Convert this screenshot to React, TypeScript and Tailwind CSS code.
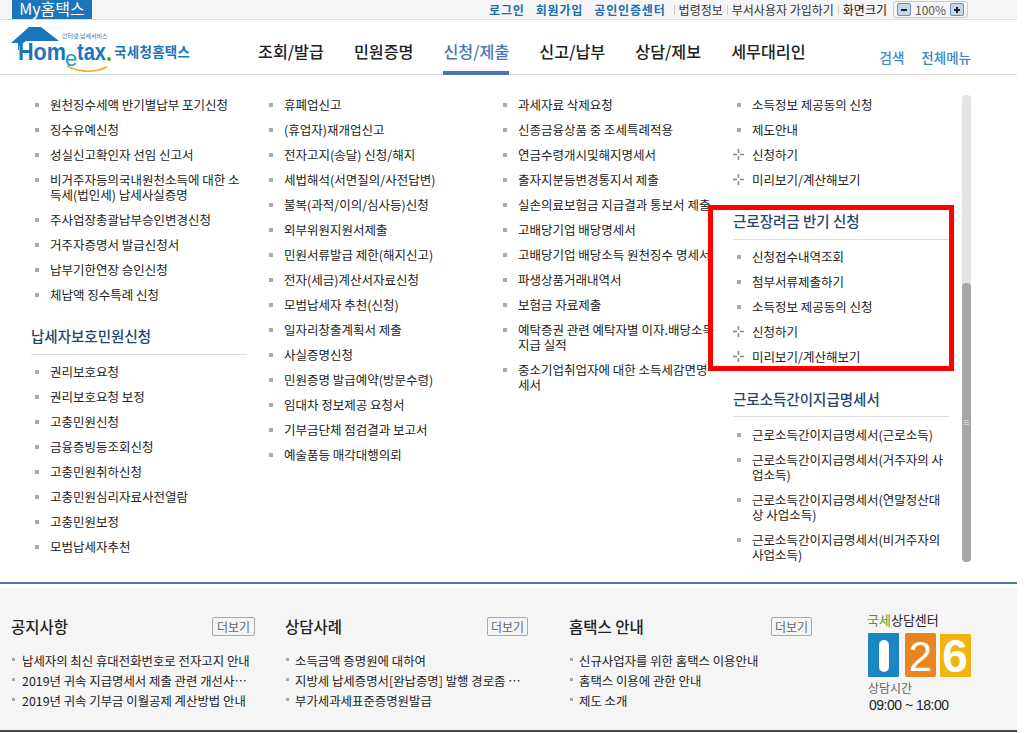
import React from 'react';

const font = { fontFamily: '"Noto Sans CJK KR", "Noto Sans", sans-serif' };

type Row = { text: string; plus?: boolean };
type Block = { title?: string; rows: Row[] };

const r = (text: string): Row => ({ text });
const p = (text: string): Row => ({ text, plus: true });

const columns: Block[][] = [
  [
    {
      rows: [
        r('원천징수세액 반기별납부 포기신청'),
        r('징수유예신청'),
        r('성실신고확인자 선임 신고서'),
        r('비거주자등의국내원천소득에 대한 소득세(법인세) 납세사실증명'),
        r('주사업장총괄납부승인변경신청'),
        r('거주자증명서 발급신청서'),
        r('납부기한연장 승인신청'),
        r('체납액 징수특례 신청'),
      ],
    },
    {
      title: '납세자보호민원신청',
      rows: [
        r('권리보호요청'),
        r('권리보호요청 보정'),
        r('고충민원신청'),
        r('금융증빙등조회신청'),
        r('고충민원취하신청'),
        r('고충민원심리자료사전열람'),
        r('고충민원보정'),
        r('모범납세자추천'),
      ],
    },
  ],
  [
    {
      rows: [
        r('휴폐업신고'),
        r('(휴업자)재개업신고'),
        r('전자고지(송달) 신청/해지'),
        r('세법해석(서면질의/사전답변)'),
        r('불복(과적/이의/심사등)신청'),
        r('외부위원지원서제출'),
        r('민원서류발급 제한(해지신고)'),
        r('전자(세금)계산서자료신청'),
        r('모범납세자 추천(신청)'),
        r('일자리창출계획서 제출'),
        r('사실증명신청'),
        r('민원증명 발급예약(방문수령)'),
        r('임대차 정보제공 요청서'),
        r('기부금단체 점검결과 보고서'),
        r('예술품등 매각대행의뢰'),
      ],
    },
  ],
  [
    {
      rows: [
        r('과세자료 삭제요청'),
        r('신종금융상품 중 조세특례적용'),
        r('연금수령개시및해지명세서'),
        r('출자지분등변경통지서 제출'),
        r('실손의료보험금 지급결과 통보서 제출'),
        r('고배당기업 배당명세서'),
        r('고배당기업 배당소득 원천징수 명세서'),
        r('파생상품거래내역서'),
        r('보험금 자료제출'),
        r('예탁증권 관련 예탁자별 이자.배당소득 지급 실적'),
        r('중소기업취업자에 대한 소득세감면명세서'),
      ],
    },
  ],
  [
    {
      rows: [
        r('소득정보 제공동의 신청'),
        r('제도안내'),
        p('신청하기'),
        p('미리보기/계산해보기'),
      ],
    },
    {
      title: '근로장려금 반기 신청',
      rows: [
        r('신청접수내역조회'),
        r('첨부서류제출하기'),
        r('소득정보 제공동의 신청'),
        p('신청하기'),
        p('미리보기/계산해보기'),
      ],
    },
    {
      title: '근로소득간이지급명세서',
      rows: [
        r('근로소득간이지급명세서(근로소득)'),
        r('근로소득간이지급명세서(거주자의 사업소득)'),
        r('근로소득간이지급명세서(연말정산대상 사업소득)'),
        r('근로소득간이지급명세서(비거주자의 사업소득)'),
      ],
    },
  ],
];

const notices = [
  {
    title: '공지사항',
    box: 'w-[244px] mr-[30px] shrink-0',
    more: 'w-[43px] h-[19px] border border-[#aaa] rounded-[2px] text-[12px] leading-[17px] text-center text-[#666]',
    item: 'relative pl-[11px] text-[12.4px] leading-[20px] text-[#222] truncate',
    items: ['납세자의 최신 휴대전화번호로 전자고지 안내', '2019년 귀속 지급명세서 제출 관련 개선사항 안내', '2019년 귀속 기부금 이월공제 계산방법 안내'],
  },
  {
    title: '상담사례',
    box: 'w-[243px] mr-[41px] shrink-0',
    more: 'w-[41px] h-[19px] border border-[#aaa] rounded-[2px] text-[12px] leading-[17px] text-center text-[#666]',
    item: 'relative pl-[10px] pr-[6px] text-[12.4px] leading-[20px] text-[#222] truncate',
    items: ['소득금액 증명원에 대하여', '지방세 납세증명서[완납증명] 발행 경로좀 알려주세요', '부가세과세표준증명원발급'],
  },
  {
    title: '홈택스 안내',
    box: 'w-[243px] mr-[56px] shrink-0',
    more: 'w-[41px] h-[19px] border border-[#aaa] rounded-[2px] text-[12px] leading-[17px] text-center text-[#666]',
    item: 'relative pl-[10px] pr-[6px] text-[12.4px] leading-[20px] text-[#222] truncate',
    items: ['신규사업자를 위한 홈택스 이용안내', '홈택스 이용에 관한 안내', '제도 소개'],
  },
];

const PlusMark = () => (
  <svg width="11" height="11" viewBox="0 0 11 11" className="absolute left-[-19px] top-[2px]">
    <path d="M5.5 0v4M5.5 7v4M0 5.5h4M7 5.5h4" stroke="#8a8a8a" strokeWidth="1.6" />
  </svg>
);

const MenuRow = ({ row }: { row: Row }) => (
  <li className="pl-[19px] text-[12.5px] leading-[15px] text-[#222] py-[5px]">
    <span className="relative block">
      {row.plus ? (
        <PlusMark />
      ) : (
        <span className="absolute left-[-15px] top-[6px] w-[4px] h-[4px] bg-[#aaa]" />
      )}
      {row.text}
    </span>
  </li>
);

// 좌표는 로고 왼쪽 위(11, 24) 기준
const Logo = () => (
  <svg width="190" height="50" viewBox="0 0 190 50" className="shrink-0">
    <path d="M0 19 L18 3 H30 L48 17 H15 L8 22 V26 H7 V19 Z" fill="#1b75bc" />
    <text x="51" y="14" fontSize="6" fill="#1b75bc">인터넷 납세서비스</text>
    <text x="7" y="36" fontSize="24" fontWeight="700" fill="#1b75bc" fontFamily="Liberation Sans, sans-serif" textLength="48" lengthAdjust="spacingAndGlyphs">Hom</text>
    <text x="54" y="42" fontSize="22" fill="#1b9ad6" fontFamily="Liberation Sans, sans-serif">e</text>
    <text x="66" y="36" fontSize="24" fontWeight="700" fill="#1b75bc" fontFamily="Liberation Sans, sans-serif" textLength="29" lengthAdjust="spacingAndGlyphs">tax</text>
    <circle cx="98" cy="35" r="2" fill="#58a618" />
    <path d="M56 42 Q76 52 96 43" fill="none" stroke="#f5a623" strokeWidth="1.6" />
    <text x="103" y="33" fontSize="13.5" fontWeight="700" fill="#1b75bc" textLength="76">국세청홈택스</text>
  </svg>
);

const CallCenterLogo = () => (
  <svg width="104" height="48" viewBox="0 0 104 48" className="block">
    <rect x="0" y="0" width="31" height="44" rx="1" fill="#1a86c4" />
    <rect x="37" y="0" width="31" height="44" rx="2" fill="#e8851f" />
    <rect x="72" y="1" width="31" height="43" rx="1" fill="#f4b410" />
    <rect x="11" y="7" width="10" height="32" rx="5" fill="#fff" />
    <text x="52.5" y="38" textAnchor="middle" fontSize="42" fill="#fff" fontFamily="Liberation Sans, sans-serif">2</text>
    <text x="87" y="39" textAnchor="middle" fontSize="46" fontWeight="700" fill="#fff" fontFamily="Liberation Sans, sans-serif">6</text>
  </svg>
);

const ZoomButton = ({ plus }: { plus?: boolean }) => (
  <span className="relative w-[14px] h-[13px] rounded-[2px] border border-[#6b8fb5] bg-[#c5d8ea] flex items-center justify-center">
    <span className="w-[6px] h-[2px] bg-[#222]" />
    {plus && <span className="absolute w-[2px] h-[6px] bg-[#222]" />}
  </span>
);

export default function App() {
  return (
    <div className="relative w-[1017px] h-[733px] overflow-hidden bg-white" style={font}>
      {/* top bar */}
      <div className="h-[20px] bg-[#f5f5f5] border-b border-[#ddd] flex items-center pl-[12px] pr-[49px]">
        <div className="w-[80px] h-[19px] bg-[#1a75bb] text-white text-[16px] leading-[16px] text-center self-start">My홈택스</div>
        <div className="ml-auto flex items-center text-[12px] leading-[16px] text-[#333]">
          <a className="font-bold tracking-[0.85px] text-[#1a6fb0] mr-[11px]">로그인</a>
          <a className="font-bold tracking-[0.85px] text-[#1a6fb0] mr-[11px]">회원가입</a>
          <a className="font-bold tracking-[0.85px] text-[#1a6fb0] mr-[8px]">공인인증센터</a>
          <span className="w-px h-[10px] bg-[#ccc] mr-[4px]" />
          <a className="mr-[4px]">법령정보</a>
          <span className="w-px h-[10px] bg-[#ccc] mr-[4px]" />
          <a className="mr-[4px]">부서사용자 가입하기</a>
          <span className="w-px h-[10px] bg-[#ccc] mr-[4px]" />
          <span className="text-[#111] mr-[6px]">화면크기</span>
          <div className="flex items-center h-[17px] border border-[#ccc] rounded-[3px] w-[75px] justify-between px-[3px]">
            <ZoomButton />
            <span className="text-[12px] text-[#555]">100%</span>
            <ZoomButton plus />
          </div>
        </div>
      </div>

      {/* logo + gnb */}
      <div className="h-[55px] border-b border-[#ddd] flex pl-[11px]">
        <div className="pt-[4px]"><Logo /></div>
        <nav className="ml-[57px] flex gap-[30px] text-[16.2px] font-medium text-[#222]">
          {['조회/발급', '민원증명', '신청/제출', '신고/납부', '상담/제보', '세무대리인'].map((m) => (
            <a
              key={m}
              className={m === '신청/제출' ? 'h-[55px] pt-[19px] leading-[24px] text-[#4a76b8] border-b-4 border-[#4a76b8]' : 'h-[55px] pt-[19px] leading-[24px]'}
            >
              {m}
            </a>
          ))}
        </nav>
        <div className="ml-auto mr-[46px] flex gap-[17px] pt-[28px] text-[13.5px] leading-[18px] font-medium text-[#3b86c6]">
          <a>검색</a>
          <a>전체메뉴</a>
        </div>
      </div>

      {/* full menu */}
      <div className="h-[509px] flex pt-[16.5px] border-b-2 border-[#4a76b8] overflow-hidden">
        <div className="w-[962px] flex pl-[31px] overflow-hidden">
          {columns.map((col, i) => (
            <div key={i} className="w-[234px] shrink-0 pr-[18px]">
              {col.map((block, j) => (
                <div key={j} className={block.title ? 'pt-[19.5px]' : ''}>
                  {block.title && (
                    <h3 className="text-[14.5px] leading-[20px] font-medium text-[#27456b] pb-[7.5px] border-b border-[#ddd] mb-[4.5px]">{block.title}</h3>
                  )}
                  <ul>
                    {block.rows.map((row) => (
                      <MenuRow key={row.text} row={row} />
                    ))}
                  </ul>
                </div>
              ))}
            </div>
          ))}
        </div>
        <div className="mt-[3.5px] w-[9px] h-[467px] bg-[#e4e4e4] rounded-[4px] flex flex-col justify-end">
          <div className="h-[279px] bg-[#a6a6a6] rounded-[4px] flex flex-col items-center justify-center gap-px">
            <span className="w-[5px] h-px bg-[#d0d0d0]" />
            <span className="w-[5px] h-px bg-[#d0d0d0]" />
            <span className="w-[5px] h-px bg-[#d0d0d0]" />
          </div>
        </div>
      </div>

      {/* 강조 표시 */}
      <div className="absolute left-[708px] top-[205px] w-[246px] h-[166px] border-[5px] border-[#ff0000]" />

      {/* footer */}
      <div className="mt-[4px] h-[144px] bg-[#f5f5f5] border-b-2 border-[#444] flex pl-[11px] pt-[29px]">
        {notices.map((n) => (
          <div key={n.title} className={n.box}>
            <div className="flex items-center justify-between h-[19px] mb-[15px]">
              <h3 className="text-[15.5px] font-medium text-[#222]">{n.title}</h3>
              <a className={n.more}>더보기</a>
            </div>
            <ul>
              {n.items.map((t) => (
                <li key={t} className={n.item}>
                  <span className="absolute left-[1px] top-[7px] w-[3px] h-[3px] bg-[#aaa]" />
                  {t}
                </li>
              ))}
            </ul>
          </div>
        ))}
        <div className="w-[104px] shrink-0 -mt-[4px]">
          <div className="text-[13px] leading-[14px] h-[20px] text-[#222] whitespace-nowrap -ml-px"><span className="text-[#4c9a2a]">국세</span>상담센터</div>
          <CallCenterLogo />
          <div className="text-[12px] leading-[14px] text-[#666]">상담시간</div>
          <div className="mt-px ml-px text-[14px] leading-[18px] text-[#222] tracking-[-0.5px] whitespace-nowrap" style={{ fontFamily: '"Liberation Sans", sans-serif' }}>09:00 ~ 18:00</div>
        </div>
      </div>
    </div>
  );
}
